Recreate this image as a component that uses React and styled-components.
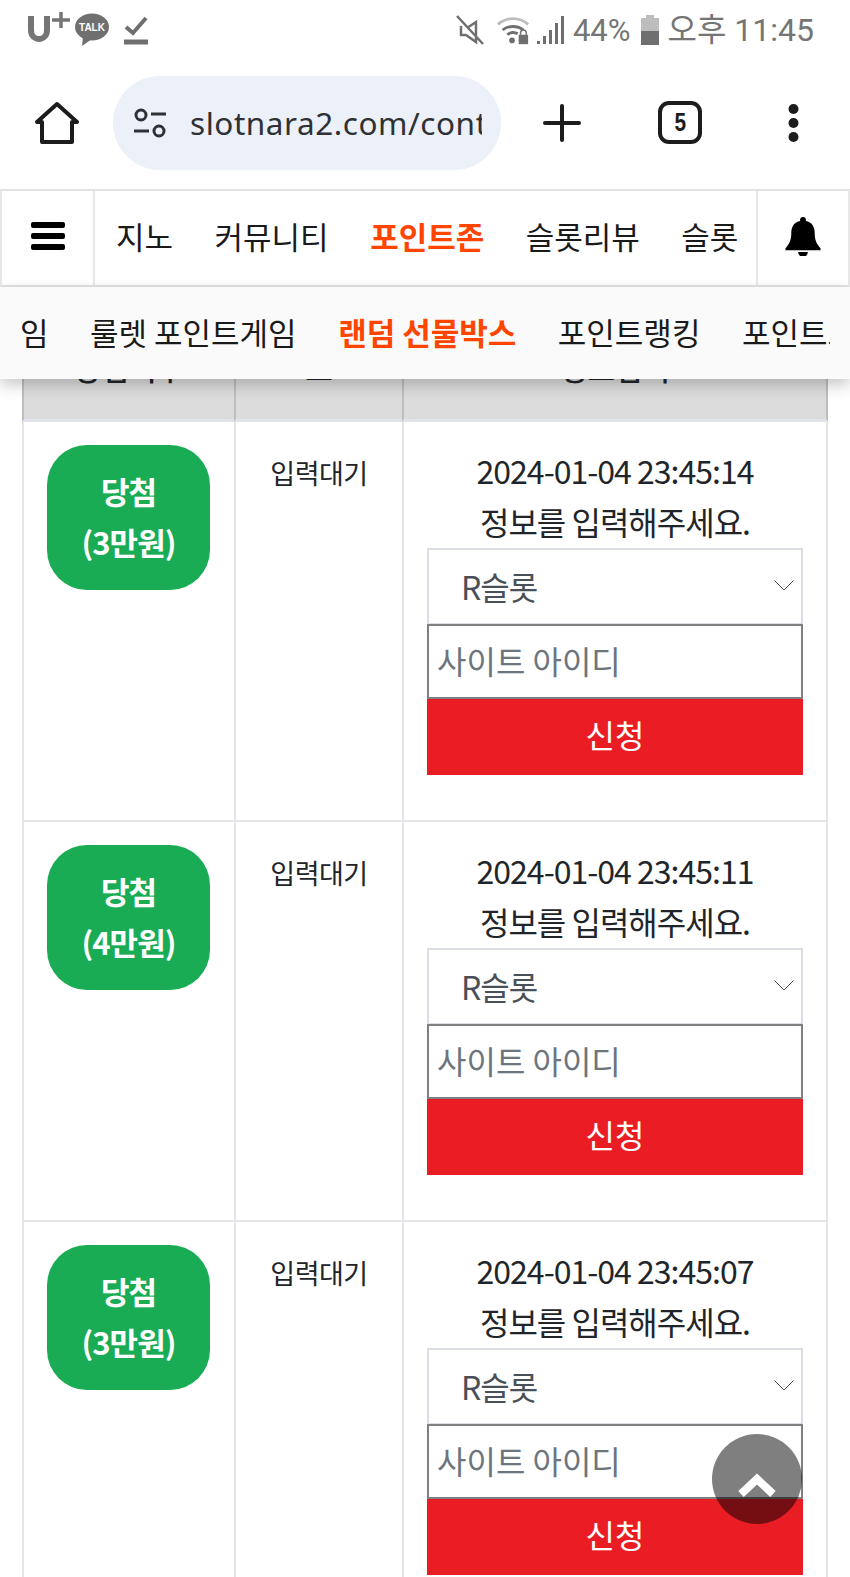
import styled, { createGlobalStyle } from 'styled-components';

const GlobalStyle = createGlobalStyle`
  html, body {
    margin: 0;
    padding: 0;
    background: #fff;
  }
  * {
    box-sizing: border-box;
  }
`;

const Page = styled.div`
  position: relative;
  width: 850px;
  height: 1577px;
  overflow: hidden;
  background: #fff;
  font-family: 'Noto Sans CJK KR', 'Noto Sans', sans-serif;
`;

const StatusBar = styled.div`
  height: 60px;
  display: flex;
  align-items: center;
  justify-content: space-between;
  padding: 0 36px 0 27px;
  color: #757575;
`;

const StatusGroup = styled.div`
  display: flex;
  align-items: center;
`;

const StatusIcon = styled.svg`
  flex: none;
  margin-left: ${(p) => p.$left || 0}px;
`;

const StatusText = styled.span`
  margin-left: ${(p) => p.$left || 0}px;
  font-family: Roboto, 'Noto Sans CJK KR', sans-serif;
  font-size: ${(p) => p.$size}px;
  line-height: 1;
  white-space: nowrap;
`;

const BrowserBar = styled.div`
  height: 129px;
  display: flex;
  align-items: center;
  padding-bottom: 4px;
`;

const HomeSlot = styled.div`
  width: 113px;
  display: flex;
  justify-content: center;
`;

const UrlPill = styled.div`
  width: 388px;
  height: 94px;
  border-radius: 47px;
  background: #ebf0f9;
  display: flex;
  align-items: center;
  padding-left: 19px;
  gap: 22px;
`;

const UrlText = styled.div`
  width: 292px;
  overflow: hidden;
  white-space: nowrap;
  font-family: 'Noto Sans', sans-serif;
  font-size: 31.5px;
  letter-spacing: 0.55px;
  color: #303134;
`;

const BrowserActions = styled.div`
  flex: 1;
  display: flex;
  align-items: center;
  padding-left: 42px;
`;

const TabCount = styled.div`
  width: 44px;
  height: 43px;
  margin: 0 86px 0 77px;
  border: 4px solid #1c1c1c;
  border-radius: 11px;
  display: flex;
  align-items: center;
  justify-content: center;
  font-family: 'Liberation Sans', sans-serif;
  font-weight: 700;
  font-size: 26px;
  color: #1c1c1c;
`;

const TabDigit = styled.span`
  display: block;
  transform: scaleX(0.8);
`;

const MainNav = styled.div`
  height: 98px;
  display: flex;
  border-top: 2px solid #e2e2e2;
  border-bottom: 2px solid #e2e2e2;
  border-left: 2px solid #e8e8e8;
  border-right: 2px solid #e8e8e8;
  background: #fff;
`;

const NavIconCell = styled.div`
  width: ${(p) => p.$width}px;
  flex: none;
  display: flex;
  align-items: center;
  justify-content: center;
  padding-bottom: ${(p) => p.$lift || 0}px;
  border-${(p) => p.$side}: 2px solid #e8e8e8;
`;

const NavScroller = styled.div`
  flex: 1;
  overflow: hidden;
  display: flex;
  align-items: center;
  gap: 41.5px;
  padding: 0 0 6px 21px;
  white-space: nowrap;
`;

const NavLink = styled.span`
  flex: none;
  font-size: ${(p) => p.$size || '31px'};
  font-weight: ${(p) => (p.$active ? 700 : 400)};
  color: ${(p) => (p.$active ? '#ff4500' : '#1a1a1a')};
`;

const SubNav = styled.div`
  position: relative;
  z-index: 2;
  height: 92px;
  display: flex;
  align-items: center;
  gap: 41.5px;
  padding: 0 0 4px 20px;
  background: #fafafa;
  box-shadow: 0 6px 14px rgba(0, 0, 0, 0.22);
  overflow: hidden;
  white-space: nowrap;
`;

const SubNavClip = styled.span`
  display: block;
  flex: none;
  width: 88px;
  overflow: hidden;
`;

const Board = styled.div`
  margin: -28px 22px 0 22px;
  width: 806px;
`;

const Grid = styled.div`
  display: grid;
  grid-template-columns: 212px 168px 426px;
`;

const HeadCell = styled.div`
  height: 71px;
  background: #dcdcdc;
  border-left: 2px solid #bdbdbd;
  border-right: ${(p) => (p.$last ? '2px solid #bdbdbd' : 'none')};
  border-bottom: 3px solid #e0e4ea;
  text-align: center;
  font-size: 30px;
  line-height: 32px;
  font-weight: 500;
  color: #212529;
`;

const Cell = styled.div`
  height: 400px;
  border-left: 2px solid #e3e5e8;
  border-right: ${(p) => (p.$last ? '2px solid #e3e5e8' : 'none')};
  border-bottom: 2px solid #e3e5e8;
  padding: ${(p) => p.$pad};
  color: #212529;
`;

const WinBadge = styled.div`
  width: 163px;
  height: 145px;
  margin-left: 23px;
  padding-bottom: 3px;
  border-radius: 40px;
  background: #1aab55;
  color: #fff;
  display: flex;
  flex-direction: column;
  align-items: center;
  justify-content: center;
  font-size: 31px;
  line-height: 51px;
  font-weight: 700;
  letter-spacing: -1px;
`;

const Waiting = styled.div`
  text-align: center;
  font-size: 27px;
  line-height: 38px;
  letter-spacing: -0.5px;
`;

const InfoLine = styled.div`
  text-align: center;
  font-size: 32px;
  line-height: 51px;
  letter-spacing: -1px;
`;

const FakeSelect = styled.div`
  height: 76px;
  margin-top: 1px;
  display: flex;
  align-items: center;
  justify-content: space-between;
  padding: 0 7px 2px 32px;
  border: 2px solid #d9dde4;
  border-bottom-width: 1px;
  background: #fff;
  font-size: 32px;
  color: #495057;
  letter-spacing: -1px;
`;

const FakeInput = styled.div`
  height: 75px;
  display: flex;
  align-items: center;
  padding: 0 0 3px 8px;
  border: 2px solid #808080;
  background: #fff;
  font-size: 32px;
  color: #6c757d;
`;

const SubmitBtn = styled.div`
  height: 76px;
  padding-bottom: 7px;
  display: flex;
  align-items: center;
  justify-content: center;
  background: #ea1d24;
  color: #fff;
  font-size: 32px;
`;

const ScrollTop = styled.div`
  position: absolute;
  left: 712px;
  top: 1434px;
  width: 90px;
  height: 90px;
  border-radius: 50%;
  background: rgba(0, 0, 0, 0.5);
  display: flex;
  justify-content: center;
  align-items: center;
  padding-top: 10px;
  z-index: 3;
`;

const rows = [
  { prize: '(3만원)', time: '2024-01-04 23:45:14' },
  { prize: '(4만원)', time: '2024-01-04 23:45:11' },
  { prize: '(3만원)', time: '2024-01-04 23:45:07' },
];

const Row = ({ row }) => (
  <>
    <Cell $pad="23px 0 0">
      <WinBadge>
        <span>당첨</span>
        <span>{row.prize}</span>
      </WinBadge>
    </Cell>
    <Cell $pad="32px 0 0">
      <Waiting>입력대기</Waiting>
    </Cell>
    <Cell $last $pad="23px 23px 0">
      <InfoLine>{row.time}</InfoLine>
      <InfoLine>정보를 입력해주세요.</InfoLine>
      <FakeSelect>
        R슬롯
        <svg width="20" height="11" viewBox="0 0 20 11" fill="none" stroke="#495057" strokeWidth="1">
          <path d="M0.5 0.5l9.500 9.500 9.500-9.500" />
        </svg>
      </FakeSelect>
      <FakeInput>사이트 아이디</FakeInput>
      <SubmitBtn>신청</SubmitBtn>
    </Cell>
  </>
);

const App = () => (
  <Page>
    <GlobalStyle />
    <StatusBar>
      <StatusGroup>
        <StatusIcon width="48" height="36" viewBox="0 0 48 36" fill="none" stroke="#757575">
          <path d="M4 4v14c0 12 16 12 16 0V4" strokeWidth="6" />
          <path d="M25 8h18M34 0v16" strokeWidth="3.5" />
        </StatusIcon>
        <StatusIcon width="34" height="34" viewBox="0 0 34 34">
          <ellipse cx="17" cy="14" rx="17" ry="13.500" fill="#6f6f6f" />
          <path d="M8 24l-1 9 10-7z" fill="#6f6f6f" />
          <text x="17" y="18" fontSize="10" fontWeight="700" fill="#fff" textAnchor="middle" fontFamily="Liberation Sans">TALK</text>
        </StatusIcon>
        <StatusIcon $left={14} width="26" height="30" viewBox="0 0 26 30" fill="none" stroke="#6f6f6f">
          <path d="M3 12l7 6L23 3" strokeWidth="4" />
          <path d="M1 27h24" strokeWidth="5" />
        </StatusIcon>
      </StatusGroup>
      <StatusGroup>
        <StatusIcon width="28" height="32" viewBox="0 0 28 32" fill="none" stroke="#6f6f6f" strokeWidth="2.500">
          <path d="M1 2l26 28M5 12v9h5l10 7V8l-9 6" />
        </StatusIcon>
        <StatusIcon $left={12} width="34" height="32" viewBox="0 0 36 32" fill="none">
          <path d="M2 10c9-8 23-8 32 0" stroke="#bdbdbd" strokeWidth="3" />
          <path d="M7 16c6-5 16-5 22 0M12 21c3-3 8-3 11-1" stroke="#6f6f6f" strokeWidth="3" />
          <circle cx="17" cy="27" r="3" fill="#6f6f6f" />
          <rect x="24" y="21" width="10" height="10" fill="#6f6f6f" />
          <path d="M26 21v-2a3 3 0 0 1 6 0v2" stroke="#6f6f6f" strokeWidth="1.500" />
        </StatusIcon>
        <StatusIcon $left={6} width="30" height="32" viewBox="0 0 30 32" fill="#6f6f6f">
          <rect x="1" y="27" width="3" height="3" />
          <rect x="7" y="22" width="3" height="8" />
          <rect x="13" y="16" width="3" height="14" />
          <rect x="19" y="9" width="3" height="21" />
          <rect x="25" y="2" width="3" height="28" />
        </StatusIcon>
        <StatusText $size={31} $left={7}>44%</StatusText>
        <StatusIcon $left={10} width="20" height="32" viewBox="0 0 20 32">
          <rect x="6" y="1" width="8" height="3" fill="#bdbdbd" />
          <rect x="1" y="4" width="18" height="13" fill="#bdbdbd" />
          <rect x="1" y="17" width="18" height="14" fill="#6f6f6f" />
        </StatusIcon>
        <StatusText $size={32} $left={7}>오후 11:45</StatusText>
      </StatusGroup>
    </StatusBar>

    <BrowserBar>
      <HomeSlot>
        <svg width="44" height="44" viewBox="0 0 44 44" fill="none" stroke="#1c1c1c" strokeWidth="4" strokeLinejoin="round">
          <path d="M2 21L22 3l20 18h-5v20H7V21z" />
        </svg>
      </HomeSlot>
      <UrlPill>
        <svg width="36" height="30" viewBox="0 0 36 30" fill="none" stroke="#303134" strokeWidth="3">
          <circle cx="9" cy="7" r="5" />
          <path d="M19 6h15M2 23h15" />
          <circle cx="27" cy="23" r="5" />
        </svg>
        <UrlText>slotnara2.com/contents</UrlText>
      </UrlPill>
      <BrowserActions>
        <svg width="38" height="38" viewBox="0 0 38 38" stroke="#1c1c1c" strokeWidth="4" strokeLinecap="round">
          <path d="M2 19h34M19 2v34" />
        </svg>
        <TabCount><TabDigit>5</TabDigit></TabCount>
        <svg width="11" height="38" viewBox="0 0 11 38" fill="#1c1c1c">
          <circle cx="5.500" cy="5" r="5" />
          <circle cx="5.500" cy="19" r="5" />
          <circle cx="5.500" cy="33" r="5" />
        </svg>
      </BrowserActions>
    </BrowserBar>

    <MainNav>
      <NavIconCell $width={93} $side="right" $lift={4}>
        <svg width="34" height="28" viewBox="0 0 34 28" fill="#000">
          <rect y="0" width="34" height="6" rx="2" />
          <rect y="11" width="34" height="6" rx="2" />
          <rect y="22" width="34" height="6" rx="2" />
        </svg>
      </NavIconCell>
      <NavScroller>
        <NavLink>지노</NavLink>
        <NavLink>커뮤니티</NavLink>
        <NavLink $active>포인트존</NavLink>
        <NavLink>슬롯리뷰</NavLink>
        <NavLink>슬롯</NavLink>
      </NavScroller>
      <NavIconCell $width={92} $side="left" $lift={4}>
        <svg width="36" height="39" viewBox="0 0 36 40" fill="#000">
          <path d="M18 0a3 3 0 0 1 3 3v1c6 1 9 6 9 12 0 8 2 12 6 16v2H0v-2c4-4 6-8 6-16 0-6 3-11 9-12V3a3 3 0 0 1 3-3z" />
          <path d="M13 36h10a5 5 0 0 1-10 0z" />
        </svg>
      </NavIconCell>
    </MainNav>

    <SubNav>
      <NavLink $size="31px">임</NavLink>
      <NavLink $size="31px">룰렛 포인트게임</NavLink>
      <NavLink $size="31px" $active>랜덤 선물박스</NavLink>
      <NavLink $size="31px">포인트랭킹</NavLink>
      <SubNavClip><NavLink $size="31px">포인트교환</NavLink></SubNavClip>
    </SubNav>

    <Board>
      <Grid>
        <HeadCell>당첨여부</HeadCell>
        <HeadCell>보</HeadCell>
        <HeadCell $last>정보입력</HeadCell>
        {rows.map((row) => (
          <Row key={row.time} row={row} />
        ))}
      </Grid>
    </Board>

    <ScrollTop>
      <svg width="38" height="26" viewBox="0 0 38 26" fill="none" stroke="#fff" strokeWidth="8">
        <path d="M3 23L19 8l16 15" />
      </svg>
    </ScrollTop>
  </Page>
);

export default App;
